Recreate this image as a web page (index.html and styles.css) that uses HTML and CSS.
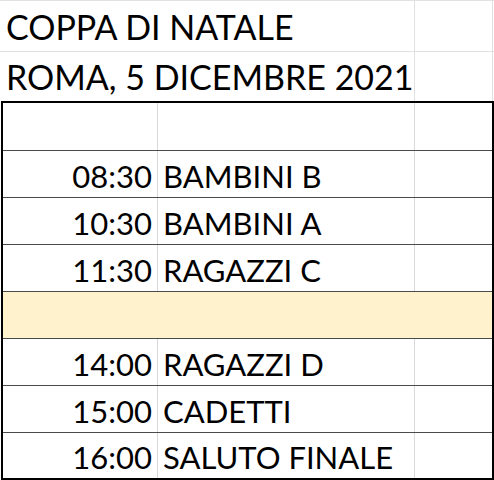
FILE: index.html
```html
<!DOCTYPE html>
<html lang="it">
<head>
<meta charset="utf-8">
<title>Coppa di Natale</title>
<link rel="stylesheet" href="styles.css">
</head>
<body>
<div class="sheet">
  <div class="head">
    <div class="hrow">
      <div class="hcell title">COPPA DI NATALE</div>
      <div class="hcell side"></div>
    </div>
    <div class="hrow second">
      <div class="hcell title">ROMA, 5 DICEMBRE 2021</div>
      <div class="hcell side"></div>
    </div>
  </div>
  <div class="table">
    <div class="row first"><div class="c time"></div><div class="c name"></div><div class="c extra"></div></div>
    <div class="row"><div class="c time">08:30</div><div class="c name">BAMBINI B</div><div class="c extra"></div></div>
    <div class="row"><div class="c time">10:30</div><div class="c name">BAMBINI A</div><div class="c extra"></div></div>
    <div class="row"><div class="c time">11:30</div><div class="c name">RAGAZZI C</div><div class="c extra"></div></div>
    <div class="row break"><div class="c time"></div><div class="c name"></div><div class="c extra"></div></div>
    <div class="row"><div class="c time">14:00</div><div class="c name">RAGAZZI D</div><div class="c extra"></div></div>
    <div class="row"><div class="c time">15:00</div><div class="c name">CADETTI</div><div class="c extra"></div></div>
    <div class="row last"><div class="c time">16:00</div><div class="c name">SALUTO FINALE</div><div class="c extra"></div></div>
  </div>
</div>
</body>
</html>
```
FILE: styles.css
```css
html, body {
  margin: 0;
  padding: 0;
  background: #ffffff;
}

.sheet {
  width: 494px;
  height: 480px;
  overflow: hidden;
  font-family: "Lato", "Carlito", "Liberation Sans", sans-serif;
  font-size: 31px;
  line-height: 31px;
  color: #000000;
}

.head {
  border-top: 1px solid #e1e1e1;
}

.hrow {
  display: grid;
  grid-template-columns: 415px 78px;
  height: 51px;
  box-sizing: border-box;
  border-bottom: 1px solid #e1e1e1;
}

.hrow.second {
  height: 49px;
  border-bottom: none;
}

.hcell {
  display: flex;
  align-items: flex-end;
  border-right: 1px solid #e1e1e1;
  box-sizing: border-box;
  white-space: nowrap;
}

.title {
  font-size: 34px;
  padding: 0 0 9px 6px;
}

.table {
  margin-left: 1px;
  width: 493px;
  box-sizing: border-box;
  border: 2px solid #000000;
}

.row {
  display: grid;
  grid-template-columns: 155px 257px 77px;
  height: 47px;
  box-sizing: border-box;
  border-bottom: 1px solid #4a4a4a;
}

.row.first {
  height: 48px;
}

.row.last {
  height: 45px;
  border-bottom: none;
}

.row.break {
  background: #fff2cc;
}

.c {
  display: flex;
  align-items: flex-end;
  padding-bottom: 5px;
  box-sizing: border-box;
  white-space: nowrap;
}

.time {
  justify-content: flex-end;
  padding-right: 5px;
  border-right: 1px solid #d9d9d9;
}

.name {
  padding-left: 5px;
  border-right: 1px solid #d9d9d9;
}

.row.break .c {
  border-right-color: transparent;
}
```
